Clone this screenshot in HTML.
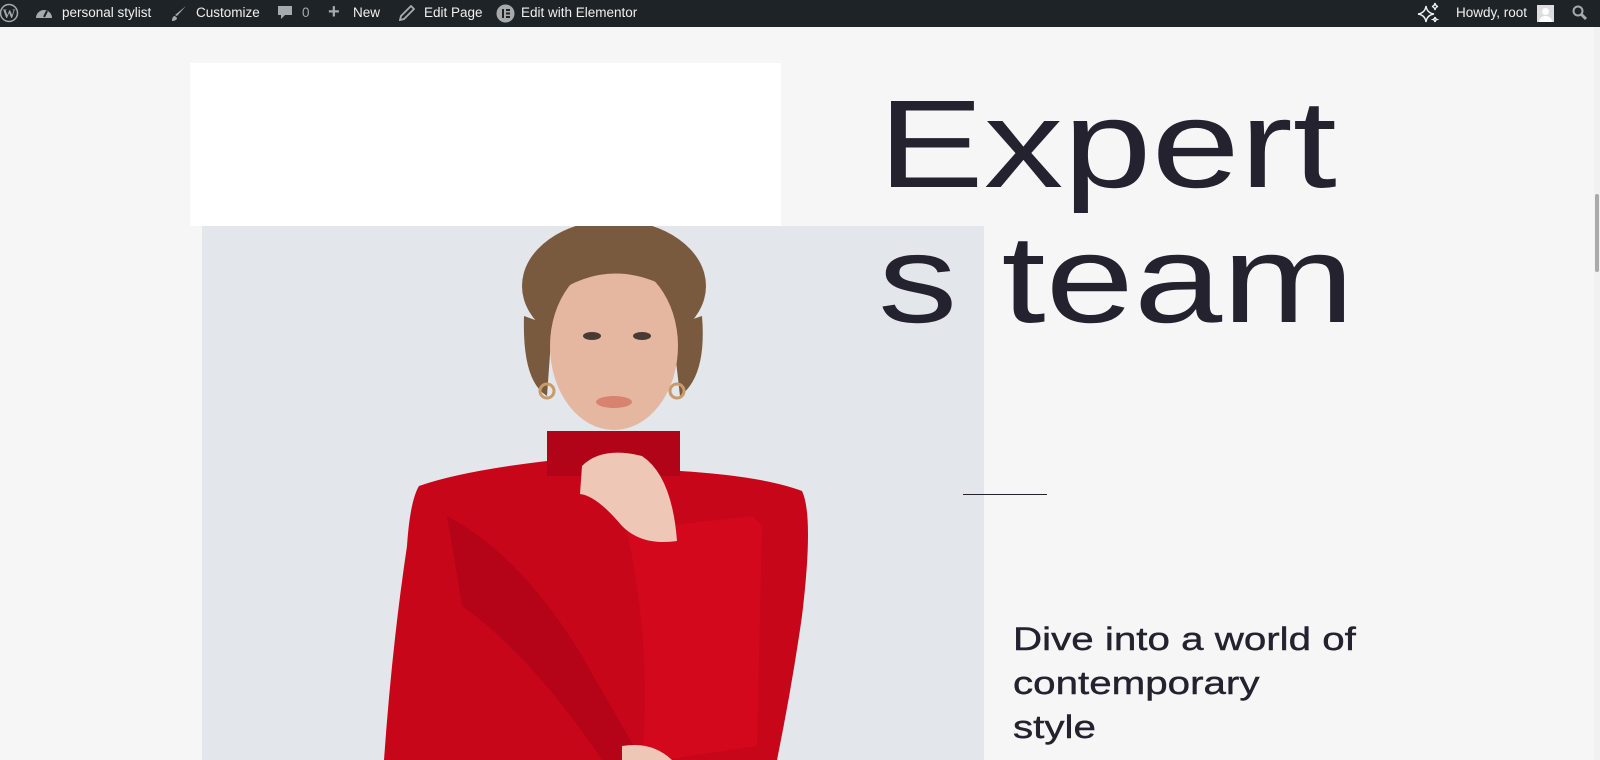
<!DOCTYPE html>
<html><head><meta charset="utf-8"><style>
html,body{margin:0;padding:0;width:1600px;height:760px;overflow:hidden;background:#f6f6f6;font-family:"Liberation Sans",sans-serif}
#bar{position:absolute;left:0;top:0;width:1600px;height:27px;background:#1d2327;color:#f0f0f1;font-size:13.5px}
#bar span{position:absolute;top:5px;white-space:nowrap}
.ic{position:absolute;top:4px}
.box{position:absolute;left:190px;top:63px;width:591px;height:163px;background:#fff}
.img{position:absolute;left:202px;top:226px;width:782px;height:534px}
h1{position:absolute;margin:0;font-weight:400;color:#24222e;font-size:125px;line-height:135px;left:878px;top:77px;transform:scaleX(1.27);transform-origin:0 0;white-space:nowrap}
.line{position:absolute;left:963px;top:494px;width:84px;height:1px;background:#24222e}
p{position:absolute;margin:0;left:1013px;top:617px;font-size:32px;line-height:44px;color:#24222e;transform:scaleX(1.26);transform-origin:0 0;white-space:nowrap;-webkit-text-stroke:.4px #24222e}
.sb{position:absolute;left:1594px;top:27px;width:6px;height:733px;background:#f1f1f1}
.th{position:absolute;left:1595px;top:194px;width:4px;height:78px;background:#aaa;border-radius:2px}
</style></head><body>
<div id="bar">
<svg class="ic" style="left:0;top:3px" width="20" height="20" viewBox="0 0 20 20"><circle cx="9" cy="10" r="8.5" fill="none" stroke="#a7aaad" stroke-width="1.5"/><text x="9" y="15" font-size="13" font-family="Liberation Serif" fill="#a7aaad" text-anchor="middle" font-weight="bold">W</text></svg>
<svg class="ic" style="left:35px;top:5px" width="18" height="16" viewBox="0 0 18 16"><path d="M1 13A8 8 0 1 1 17 13Z" fill="#a7aaad"/><path d="M9 12L12 6" stroke="#1d2327" stroke-width="2"/></svg>
<span style="left:62px">personal stylist</span>
<svg class="ic" style="left:170px;top:5px" width="18" height="18" viewBox="0 0 18 18"><path d="M16 1L7 11L5 10Z M5 11C3 11 2 13 2 16C4 16 7 15 7 13Z" fill="#a7aaad"/></svg>
<span style="left:196px">Customize</span>
<svg class="ic" style="left:277px;top:5px" width="16" height="17" viewBox="0 0 16 17"><path d="M1 1H15V10H8L4 14V10H1Z" fill="#a7aaad"/></svg>
<span style="left:302px;color:#a7aaad">0</span>
<span style="left:328px;top:1px;font-size:20px;font-weight:bold;color:#a7aaad">+</span>
<span style="left:353px">New</span>
<svg class="ic" style="left:399px;top:5px" width="16" height="16" viewBox="0 0 16 16"><path d="M12 1L15 4L5 14L1 15L2 11Z" fill="none" stroke="#a7aaad" stroke-width="1.8"/></svg>
<span style="left:424px">Edit Page</span>
<svg class="ic" style="left:496px;top:4px" width="19" height="19" viewBox="0 0 19 19"><circle cx="9.5" cy="9.5" r="9" fill="#a7aaad"/><rect x="6" y="5" width="2" height="9" fill="#1d2327"/><rect x="10" y="5" width="4" height="2" fill="#1d2327"/><rect x="10" y="8.5" width="4" height="2" fill="#1d2327"/><rect x="10" y="12" width="4" height="2" fill="#1d2327"/></svg>
<span style="left:521px">Edit with Elementor</span>
<svg class="ic" style="left:1417px;top:2px" width="24" height="22" viewBox="0 0 24 22"><path d="M9 4Q10 11 17 12Q10 13 9 20Q8 13 1 12Q8 11 9 4Z M18 1Q18.5 4 21 4.5Q18.5 5 18 8Q17.5 5 15 4.5Q17.5 4 18 1Z M18 15Q18.3 17 20 17.5Q18.3 18 18 20Q17.7 18 16 17.5Q17.7 17 18 15Z" fill="none" stroke="#f0f0f1" stroke-width="1.4"/></svg>
<span style="left:1456px">Howdy, root</span>
<div style="position:absolute;left:1537px;top:5px;width:17px;height:17px;background:#ddd"><div style="position:absolute;left:5px;top:3px;width:7px;height:7px;border-radius:50%;background:#fff"></div><div style="position:absolute;left:2px;top:11px;width:13px;height:6px;border-radius:6px 6px 0 0;background:#fff"></div></div>
<svg class="ic" style="left:1572px;top:5px" width="16" height="16" viewBox="0 0 16 16"><circle cx="6" cy="6" r="4.5" fill="none" stroke="#a7aaad" stroke-width="2"/><path d="M9 9L14 14" stroke="#a7aaad" stroke-width="3"/></svg>
</div>
<div class="box"></div>
<svg class="img" viewBox="0 0 782 534">
<rect width="782" height="534" fill="#e3e6ea"/>
<path d="M217 260Q260 245 345 235L345 205L478 205L478 245Q560 250 600 265Q612 290 600 390Q590 460 575 534L182 534Q190 420 205 320Q208 275 217 260Z" fill="#c8061a"/>
<path d="M345 205L478 205L478 250L345 250Z" fill="#b20418"/>
<path d="M245 290Q320 330 380 430Q420 500 440 534L400 534Q330 430 260 380Z" fill="#a80416" opacity=".6"/>
<path d="M425 305L550 290L560 300L555 520L460 534L440 534Q450 420 425 305Z" fill="#d4081d"/>
<ellipse cx="412" cy="60" rx="92" ry="66" fill="#7a5a3e"/>
<path d="M322 90Q320 155 345 170L350 100Z M500 90Q505 150 478 170L470 100Z" fill="#7a5a3e"/>
<ellipse cx="412" cy="120" rx="64" ry="84" fill="#e5b7a1"/>
<path d="M350 70Q412 25 480 70L482 50Q412 10 340 55Z" fill="#7a5a3e"/>
<ellipse cx="390" cy="110" rx="9" ry="4" fill="#4a3a34"/><ellipse cx="440" cy="110" rx="9" ry="4" fill="#4a3a34"/>
<ellipse cx="412" cy="176" rx="18" ry="6" fill="#d88270"/>
<circle cx="345" cy="165" r="7" fill="none" stroke="#c99a6a" stroke-width="3"/><circle cx="475" cy="165" r="7" fill="none" stroke="#c99a6a" stroke-width="3"/>
<path d="M380 240Q400 220 440 230Q470 250 475 315Q440 320 420 300Q395 270 378 268Z" fill="#efc7b6"/>
<path d="M420 520Q450 515 470 534L420 534Z" fill="#efc7b6"/>
</svg>
<h1>Expert<br>s&nbsp;team</h1>
<div class="line"></div>
<p>Dive into a world of<br>contemporary<br>style</p>
<div class="sb"></div><div class="th"></div>
</body></html>
